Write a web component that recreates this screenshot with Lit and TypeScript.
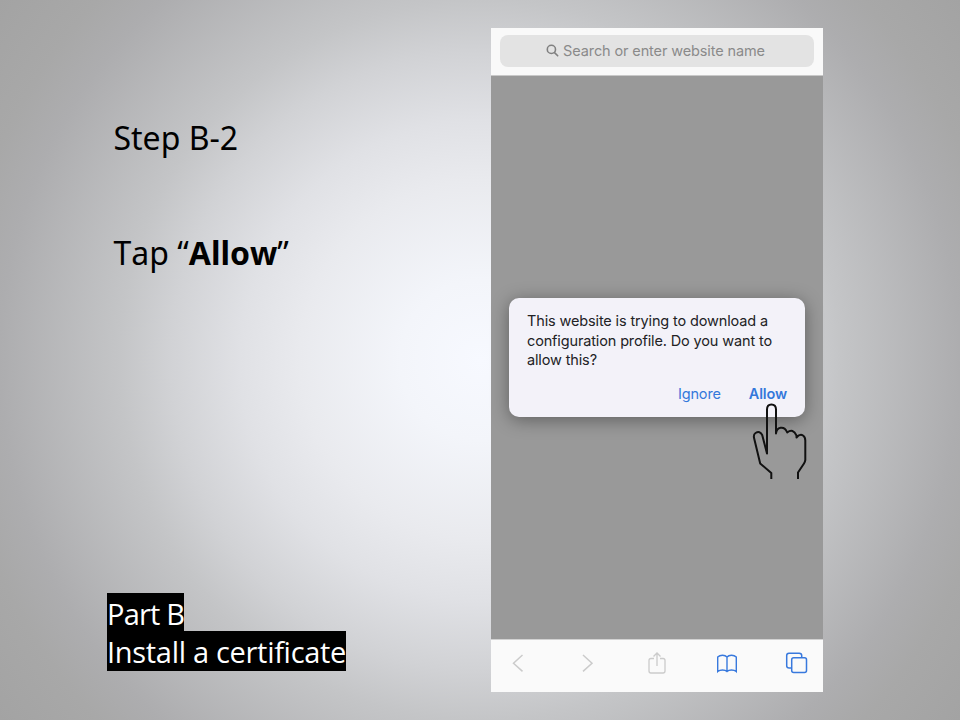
import { LitElement, html, css } from "lit";
import { customElement } from "lit/decorators.js";

@customElement("app-root")
export class AppRoot extends LitElement {
  static styles = css`
    :host { display: block; width: 960px; height: 720px; overflow: hidden; }
    * { box-sizing: border-box; }
    svg { display: block; fill: none; flex: none; }
    .slide {
      width: 960px; height: 720px; display: grid; grid-template-columns: 491px 332px; padding: 28px 0;
      background: radial-gradient(circle 600px at 480px 360px, #f7f9ff 0, #f3f5fa 80px, #e9eaee 180px, #e0e1e5 240px, #d1d2d5 310px, #c4c5c7 360px, #adadaf 480px, #a8a8a8 525px, #a3a3a3 600px);
      font-family: "Open Sans", sans-serif; color: #000;
    }
    .copy { display: flex; flex-direction: column; padding: 85px 0 0 113.5px; font-family: "Noto Sans", sans-serif; font-size: 32px; line-height: 50px; white-space: nowrap; font-kerning: none; }
    .line { margin: 0 0 65px; }
    .part { margin: 315px 0 0 -6.5px; font-family: "Open Sans", sans-serif; font-size: 29px; line-height: 41px; color: #fff; display: flex; flex-direction: column; align-items: flex-start; font-kerning: normal; font-weight: 500; }
    .mark { background: #000; height: 38px; letter-spacing: -0.8px; }
    .mark.second { height: 40px; letter-spacing: -0.3px; }
    .phone { height: 664px; display: flex; flex-direction: column; font-family: Inter, sans-serif; }
    .top { height: 48px; background: #f9f9f9; padding: 7px 9px; border-bottom: 1px solid #c8c8c8; }
    .search { height: 32px; padding: 0 3px 1px 0; border-radius: 8px; background: #e3e3e3; color: #8a8a8a; display: flex; align-items: center; justify-content: center; gap: 4px; font-size: 14.5px; letter-spacing: -0.12px; white-space: nowrap; }
    .page { height: 563px; background: #999; padding: 222px 18px 0; }
    .dialog { position: relative; height: 119px; border-radius: 10px; background: #f3f2f9; box-shadow: 0 3px 18px rgba(0,0,0,.38); padding: 13px 18px 0; color: #222225; font-size: 14.5px; letter-spacing: -0.14px; line-height: 19.5px; white-space: nowrap; }
    .actions { display: flex; justify-content: flex-end; gap: 28px; margin-top: 14px; color: #3478db; }
    .allow { font-weight: 600; letter-spacing: -0.15px; }
    .hand { position: absolute; left: 242px; top: 103px; }
    .bar { height: 53px; background: #fafafa; border-top: 1px solid #d2d2d2; display: flex; justify-content: space-between; padding: 10px 14px 0 14px; }
    .off { stroke: #cbcbcb; } .on { stroke: #3879dd; }
  `;

  render() {
    return html`<main class="slide">
      <section class="copy">
        <p class="line">Step B-2</p>
        <div>Tap “<b>Allow</b>”</div>
        <div class="part"><span class="mark">Part B</span><span class="mark second">Install a certificate</span></div>
      </section>
      <section class="phone">
        <header class="top"><div class="search">
          <svg width="13" height="13" stroke="#808080" stroke-width="1.6" stroke-linecap="round"><circle cx="5.4" cy="5.4" r="4.1"/><path d="m8.5 8.6 3.2 3.2"/></svg>
          <span>Search or enter website name</span>
        </div></header>
        <div class="page"><div class="dialog">
          This website is trying to download a<br>configuration profile. Do you want to<br>allow this?
          <div class="actions"><span>Ignore</span><span class="allow">Allow</span></div>
          <svg class="hand" width="58" height="80" stroke="#111" stroke-width="2" stroke-linejoin="round">
            <path d="M20.3 78v-6L9.200 62.500L3.300 38Q2 33.500 4.500 32Q9 29.500 11.200 34L16 52.500V8.500Q16 3.500 20.400 3.500Q25 3.500 25 8.500V32.500Q25.500 27.500 29.500 26.800Q34 26 36.200 31.500Q42 27 45.500 34.500V36.500Q49 32.500 52 34.500Q54.300 36 54.300 39.500V59Q54 61 53 62.500L47 71.500V78"/>
          </svg>
        </div></div>
        <footer class="bar">
          <svg class="off" width="26" height="26" stroke-width="1.5"><path d="m17.500 5-9 8.200 9 8.200"/></svg>
          <svg class="off" width="26" height="26" stroke-width="1.5"><path d="m8 5 9 8.200-9 8.200"/></svg>
          <svg class="off" width="26" height="26" stroke-width="1.3"><path d="M10 8.500H7Q5 8.500 5 10.500v10.500q0 2 2 2h12q2 0 2-2V10.500q0-2-2-2h-3M13 16V3M9.500 6.500 13 3l3.500 3.500"/></svg>
          <svg class="on" width="26" height="26" stroke-width="1.4"><path d="M13 7Q11.500 5.200 8.500 5.200Q5.500 5.200 3.700 7V21.600Q5.500 20 8.500 20Q11.500 20 13 21.600Q14.500 20 17.500 20Q20.500 20 22.300 21.600V7Q20.500 5.200 17.500 5.200Q14.500 5.200 13 7V21.600"/></svg>
          <svg class="on" width="26" height="26" stroke-width="1.5"><rect x="8.700" y="7.700" width="14.800" height="14.800" rx="2"/><path d="M8.500 18H6.200Q3.700 18 3.700 15.700V5.500Q3.700 3.200 6 3.200h10.200q2.500 0 2.500 2.300v2"/></svg>
        </footer>
      </section>
    </main>`;
  }
}
